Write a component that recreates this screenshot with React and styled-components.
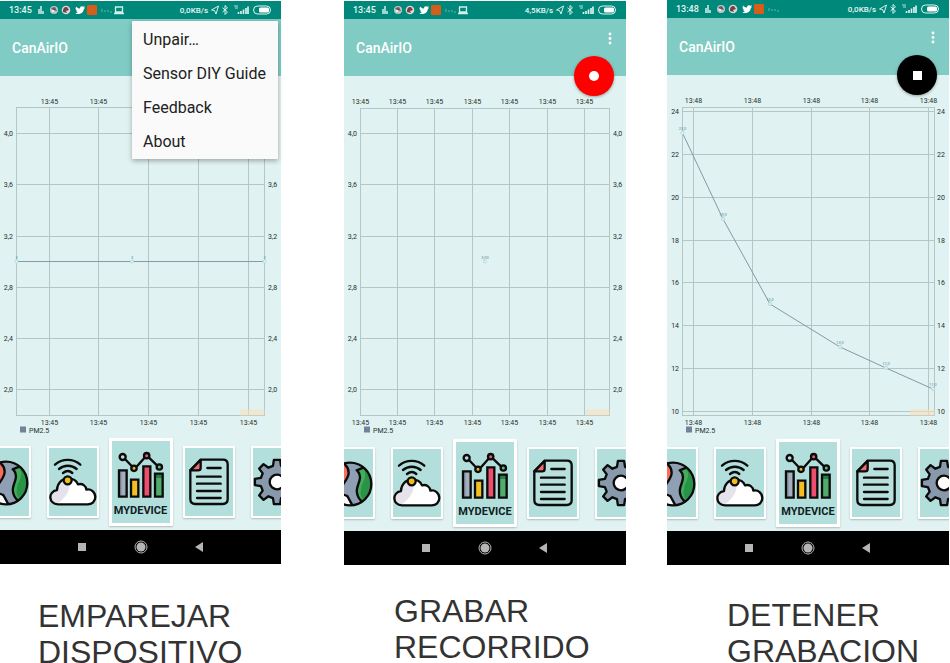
import React from "react";
import styled, { createGlobalStyle } from "styled-components";

const GlobalStyle = createGlobalStyle`
  html { scrollbar-width: none; }
  body { margin: 0; background: #fff; font-family: Roboto, sans-serif; }
  *, *::before, *::after { box-sizing: border-box; }
  button { border: 0; padding: 0; margin: 0; background: none; font: inherit; color: inherit; cursor: pointer; }
  svg { display: block; }
`;

const Page = styled.main`
  display: grid;
  grid-template-columns: 281fr 63fr 282fr 41fr 282fr 1fr;
  align-items: start;
`;

const Column = styled.section`
  grid-column: ${(p) => p.$col};
  min-width: 0;
  padding-top: ${(p) => p.$top}px;
`;

const Phone = styled.article`
  position: relative;
  background: #e0f2f1;
`;

const StatusBar = styled.div`
  display: flex;
  justify-content: space-between;
  align-items: center;
  height: 18px;
  padding: 0 9px;
  background: #00897b;
  color: #e6f5f3;
  font-size: 9px;
  font-weight: 500;
`;

const StatusGroup = styled.div`
  display: flex;
  align-items: center;
  gap: ${(p) => p.$gap}px;
`;

const Speed = styled.span`
  font-size: 8px;
`;

const AppBar = styled.header`
  position: relative;
  display: flex;
  align-items: center;
  justify-content: space-between;
  height: 57px;
  padding: 0 11px 0 12px;
  background: #80cbc4;
`;

const Title = styled.h1`
  margin: 0;
  color: #fff;
  font-size: 14px;
  line-height: 18px;
  font-weight: 500;
`;

const Kebab = styled.button`
  align-self: flex-start;
  display: flex;
  justify-content: center;
  width: 10px;
  padding-top: 13px;
`;

const Fab = styled.button`
  position: absolute;
  right: 12px;
  bottom: -20px;
  display: grid;
  place-items: center;
  width: 40px;
  height: 40px;
  border-radius: 50%;
  background: ${(p) => p.$color};
  box-shadow: 0 1px 3px rgba(0, 0, 0, 0.35);
`;

const FabMark = styled.span`
  width: ${(p) => (p.$round ? 10 : 9)}px;
  height: ${(p) => (p.$round ? 10 : 9)}px;
  border-radius: ${(p) => (p.$round ? "50%" : "0")};
  background: #fff;
`;

const Menu = styled.div`
  position: absolute;
  z-index: 2;
  top: 20px;
  right: 3px;
  width: 146px;
  padding: 2px 0 0;
  border-radius: 1px;
  background: #fafafa;
  box-shadow: 0 2px 5px rgba(0, 0, 0, 0.3);
`;

const MenuItem = styled.button`
  display: block;
  width: 100%;
  padding: 0 11px;
  color: #212121;
  font-size: 16px;
  line-height: 34px;
  text-align: left;
`;

const Plot = styled.svg`
  width: 100%;
  height: auto;
  font-family: Roboto, sans-serif;
  font-size: 7px;
  fill: #1f2f2e;
`;

const Carousel = styled.nav`
  display: flex;
  justify-content: center;
  align-items: center;
  gap: 10px;
  overflow: hidden;
  padding-bottom: 4px;
`;

const CardPair = styled.div`
  display: flex;
  flex: none;
  gap: 16px;
`;

const Card = styled.button`
  flex: none;
  display: grid;
  place-items: center;
  align-content: center;
  width: ${(p) => (p.$active ? 64 : 52)}px;
  height: ${(p) => (p.$active ? 88 : 72)}px;
  padding-top: ${(p) => (p.$active ? 4 : 0)}px;
  border: ${(p) => (p.$active ? 3 : 2)}px solid #fff;
  border-radius: 1px;
  background: #b2dfdb;
  box-shadow: 0 1px 2px rgba(0, 0, 0, 0.22);
`;

const CardLabel = styled.span`
  color: #10201f;
  font-size: 11px;
  line-height: 14px;
  font-weight: 700;
  padding-top: 5px;
`;

const SystemBar = styled.div`
  display: flex;
  justify-content: center;
  align-items: center;
  gap: 45px;
  height: 34px;
  background: #000;
`;

const Caption = styled.h2`
  margin: 0;
  padding: ${(p) => p.$top}px 0 0 ${(p) => p.$left}px;
  color: #333;
  font-family: "Liberation Sans", Arial, sans-serif;
  font-size: 32px;
  line-height: 36px;
  font-weight: 400;
`;

function NotificationIcons({ laptop }) {
  return (
    <svg width="88" height="12" viewBox="0 0 88 12" aria-hidden="true">
      <path d="M1 5v5h6V7H5V2H3v3z" fill="#9fd5cf" />
      <circle cx="17" cy="6" r="4" fill="#b9c9c6" />
      <path d="M14 4l4-1 2 4-4-1z" fill="#6d5560" />
      <circle cx="16" cy="7" r="1" fill="#fff" />
      <circle cx="29" cy="6" r="4.3" fill="#ddd8d5" />
      <path d="M26 8c0-4 1-5 4-5l2 3-3 1 1 2z" fill="#70434a" />
      <path d="M39 2.500c1.200 1.500 2.700 2 4 2 0-2 1.700-2.800 3.200-1.800l1.800-.5-.9 1.500.9.3-1.200 1C46.700 9 41.500 11.500 38.400 9.200l2.400-.8-2-1.700h1.200l-1.500-1.800z" fill="#fff" />
      <rect x="50" y="1" width="10" height="10" rx="1" fill="#dc5a17" />
      <path d="M53 4h4v4h-4z" fill="#ca6520" />
      <path d="M65 5v3M67 7h2M70 7h2M73 8h2" stroke="#5db5ab" strokeWidth="1" />
      {laptop && <path d="M78.500 3h7v5h-7zM77 9.500h10" fill="none" stroke="#d5eeeb" strokeWidth="1.300" />}
    </svg>
  );
}

function SignalIcons() {
  return (
    <svg width="62" height="12" viewBox="0 0 62 12" aria-hidden="true">
      <path d="M1.500 6l7-4-2.500 8-1.500-3.500z" fill="none" stroke="#d9f0ed" strokeWidth="1" />
      <path d="M12.500 3.800l5 4.200-2.500 2.500v-9l2.500 2.300-5 4.200" fill="none" stroke="#d9f0ed" strokeWidth="1" />
      <path d="M24 2h4M25 4h3" stroke="#b6dfda" strokeWidth="1" />
      <path d="M28.500 10V8M31 10V7M33.500 10V5.500M36 10V4M38 10V2.500" stroke="#e6f5f3" strokeWidth="1.600" />
      <rect x="43.500" y="2" width="17" height="8" rx="4" fill="none" stroke="#e6f5f3" />
      <rect x="49" y="3.500" width="10" height="5" rx="1.500" fill="#fff" />
    </svg>
  );
}

function Dots() {
  return (
    <svg width="4" height="13" viewBox="0 0 4 13" fill="#fff" aria-hidden="true">
      <circle cx="2" cy="2" r="1.400" />
      <circle cx="2" cy="6.500" r="1.400" />
      <circle cx="2" cy="11" r="1.400" />
    </svg>
  );
}

const ink = { stroke: "#0b0b0b", strokeWidth: 7, strokeLinecap: "round", strokeLinejoin: "round" };

function GlobeIcon() {
  return (
    <svg width="48" height="48" viewBox="-57 235 144 144" aria-hidden="true">
      <circle cx="18" cy="310" r="64" fill="#8f9fb4" />
      <path d="M38 269l20-8c16 14 24 30 22 52-2 22-14 38-30 48-9-11-15-24-10-39 6-20 12-32-2-53z" fill="#43ad5a" />
      <path d="M56 264c12 12 8 29-2 48-4 14-8 31 2 43 16-12 25-27 25-45 0-20-9-35-25-46z" fill="#299448" />
      <path d="M-10 360c2-19 12-17 20-8l12 20c-12 3-24-4-32-12z" fill="#f6f8f8" />
      <path d="M38 269l20-8M40 270c15 16 5 33 0 50-5 18 1 30 12 42M10 346l14 26M-6 360c0-16 4-22 16-13" fill="none" {...ink} />
      <circle cx="18" cy="310" r="64" fill="none" {...ink} />
      <path d="M-20 244c20 0 34 14 34 32 0 20-20 32-32 64-14-30-34-44-34-64 0-18 14-32 32-32z" fill="#f5705c" {...ink} />
      <circle cx="-19" cy="276" r="12" fill="#fff" {...ink} />
    </svg>
  );
}

function CloudIcon() {
  return (
    <svg width="48" height="48" viewBox="147 235 144 144" aria-hidden="true">
      <path d="M174 374c-29-1-31-38-3-43 0-19 14-34 32-35 15 0 27 7 31 18 14-4 24 5 25 16 14-4 27 8 27 22 0 13-10 22-23 22z" fill="#fff" />
      <path d="M174 371c-26-1-27-35 0-39 1-20 14-33 34-32 6 28-8 52-34 71z" fill="#e6e2ec" />
      <path d="M174 374c-29-1-31-38-3-43 0-19 14-34 32-35 15 0 27 7 31 18 14-4 24 5 25 16 14-4 27 8 27 22 0 13-10 22-23 22z" fill="none" {...ink} />
      <path d="M165 255c22-19 54-19 76 0M177 268c15-13 38-13 53 0M189 280c9-7 20-7 28 0" fill="none" {...ink} />
      <circle cx="203" cy="302" r="12" fill="#f3bd19" {...ink} />
    </svg>
  );
}

function ChartIcon() {
  return (
    <svg width="48" height="48" viewBox="350 209 144 144" aria-hidden="true">
      <path d="M356 267h23v79h-23z" fill="#8996aa" />
      <path d="M364 270h12v73h-12z" fill="#a4aebc" />
      <path d="M392 295h22v51h-22z" fill="#f5bf22" />
      <path d="M429 255h21v91h-21z" fill="#ef4d6c" />
      <path d="M464 277h23v69h-23z" fill="#50ac6a" />
      <path d="M464 277h23v13h-23z" fill="#258149" />
      <path d="M356 267h23v79h-23zM392 295h22v51h-22zM429 255h21v91h-21zM464 277h23v69h-23z" fill="none" {...ink} strokeLinejoin="miter" />
      <path d="M374 233l20 21M410 255l22-25M446 229l24 23" fill="none" {...ink} />
      <circle cx="367" cy="227" r="9" fill="#c0dbe0" {...ink} />
      <circle cx="401" cy="261" r="8" fill="#edb52b" {...ink} />
      <circle cx="439" cy="223" r="8" fill="#e95d72" {...ink} />
      <circle cx="477" cy="257" r="8" fill="#66b881" {...ink} />
    </svg>
  );
}

function DocumentIcon() {
  return (
    <svg width="48" height="48" viewBox="553 235 144 144" aria-hidden="true">
      <path d="M600 240h67c10 0 14 6 14 14v104c0 10-6 15-15 15h-82c-9 0-15-6-15-15v-86z" fill="#b8e0dd" {...ink} />
      <path d="M600 241v23c0 5-3 8-8 8h-23z" fill="#ee6d72" {...ink} />
      <path d="M620 265h40M589 291h71M589 312h71M589 334h71M589 355h71" fill="none" {...ink} />
    </svg>
  );
}

const gearOutline = Array.from({ length: 8 }, (_, i) => i * 45)
  .flatMap((a) => [[a - 14, 50], [a - 8, 67], [a + 8, 67], [a + 14, 50]])
  .map(([deg, r]) => {
    const t = (deg * Math.PI) / 180;
    return `${(72 + r * Math.cos(t)).toFixed(1)},${(72 + r * Math.sin(t)).toFixed(1)}`;
  })
  .join(" ");

function GearIcon() {
  return (
    <svg width="48" height="48" viewBox="0 0 144 144" aria-hidden="true">
      <polygon points={gearOutline} fill="#8799aa" {...ink} />
      <circle cx="72" cy="72" r="22" fill="#fff" {...ink} />
    </svg>
  );
}

function SensorChart({ width, height, left, right, top, bottom, cols, rows, points, labelLeft, labelRight, xLabel, legendX, topLabelY, topLabels = cols.length }) {
  return (
    <Plot viewBox={`0 0 ${width} ${height}`} role="img" aria-label="PM2.5">
      <g stroke="#b4c7c6" strokeWidth="1" shapeRendering="crispEdges">
        {cols.map((x) => <path key={x} d={`M${x} ${top}V${bottom}`} />)}
        {rows.map(([, y]) => <path key={y} d={`M${left} ${y}H${right}`} />)}
        <path d={`M${left} ${top}H${right}V${bottom}H${left}z`} fill="none" />
      </g>
      <rect x={right - 24} y={bottom - 6} width="24" height="6" fill="#f8e0bd" opacity="0.6" />
      <g textAnchor="middle">
        {cols.slice(0, topLabels).map((x) => <text key={x} x={x} y={topLabelY}>{xLabel}</text>)}
        {cols.map((x) => <text key={x} x={x} y={bottom + 9}>{xLabel}</text>)}
      </g>
      {rows.map(([label, y]) => (
        <g key={label}>
          <text x={labelLeft} y={y + 2.5} textAnchor="end">{label}</text>
          <text x={labelRight} y={y + 2.5}>{label}</text>
        </g>
      ))}
      <polyline points={points.map(([x, y]) => `${x},${y}`).join(" ")} fill="none" stroke="#859aa3" strokeWidth="1" />
      {points.map(([x, y, label]) => (
        <g key={x}>
          <circle cx={x} cy={y} r="1.500" fill="#e8fbff" stroke="#a9dbe5" strokeWidth="1" />
          <text x={x} y={y - 3} fontSize="4" fill="#5f8d98" textAnchor="middle">{label}</text>
        </g>
      ))}
      <rect x={legendX} y={bottom + 11} width="6" height="6" fill="#71839a" />
      <text x={legendX + 9} y={bottom + 17}>PM2.5</text>
    </Plot>
  );
}

const decimalRows = [["4,0", 57.5], ["3,6", 108.5], ["3,2", 160.5], ["2,8", 211.5], ["2,4", 262.5], ["2,0", 313.5]];

const screens = [
  {
    col: 1, top: 1, time: "13:45", speed: "0,0KB/s", laptop: true, menu: true,
    caption: ["EMPAREJAR", "DISPOSITIVO"], captionTop: 34, captionLeft: 38,
    chart: {
      width: 281, height: 362, left: 16.5, right: 264.5, top: 31.5, bottom: 339.5, topLabelY: 27.5, topLabels: 2,
      cols: [49.5, 98.5, 148.5, 198.5, 248.5], rows: decimalRows, xLabel: "13:45",
      points: [[16.5, 185.5, "3"], [132, 185.5, "3"], [264.5, 185.5, "3"]],
      labelLeft: 13, labelRight: 268, legendX: 20,
    },
  },
  {
    col: 3, top: 1, time: "13:45", speed: "4,5KB/s", laptop: true, fab: "record",
    caption: ["GRABAR", "RECORRIDO"], captionTop: 28, captionLeft: 50,
    chart: {
      width: 282, height: 363, left: 16.5, right: 265.5, top: 32.5, bottom: 339.5, topLabelY: 27.5,
      cols: [16.5, 53.5, 90.5, 128.5, 165.5, 203.5, 240.5], rows: decimalRows, xLabel: "13:45",
      points: [[141, 185.5, "3,00"]],
      labelLeft: 13, labelRight: 269, legendX: 20,
    },
  },
  {
    col: 5, top: 0, time: "13:48", speed: "0,0KB/s", laptop: false, fab: "stop",
    caption: ["DETENER", "GRABACION"], captionTop: 32, captionLeft: 60,
    chart: {
      width: 282, height: 364, left: 15.5, right: 267.5, top: 32.5, bottom: 340.5, topLabelY: 27.5,
      cols: [26.5, 85.5, 144.5, 202.5, 261.5], xLabel: "13:48",
      rows: [["24", 36.5], ["22", 79.5], ["20", 122.5], ["18", 165.5], ["16", 207.5], ["14", 250.5], ["12", 293.5], ["10", 336.5]],
      points: [[15.5, 58, "23,0"], [56, 144, "19,0"], [103, 229, "15,0"], [173, 272, "13,0"], [219, 293, "12,0"], [266, 314, "11,0"]],
      labelLeft: 12, labelRight: 270, legendX: 19,
    },
  },
];

function Screen({ data }) {
  return (
    <Column $col={data.col} $top={data.top}>
      <Phone>
        <StatusBar>
          <StatusGroup $gap={5}>
            <span>{data.time}</span>
            <NotificationIcons laptop={data.laptop} />
          </StatusGroup>
          <StatusGroup $gap={2}>
            <Speed>{data.speed}</Speed>
            <SignalIcons />
          </StatusGroup>
        </StatusBar>
        <AppBar>
          <Title>CanAirIO</Title>
          <Kebab aria-label="More options"><Dots /></Kebab>
          {data.fab && (
            <Fab $color={data.fab === "record" ? "#fe0000" : "#000"} aria-label={data.fab}>
              <FabMark $round={data.fab === "record"} />
            </Fab>
          )}
        </AppBar>
        {data.menu && (
          <Menu>
            {["Unpair…", "Sensor DIY Guide", "Feedback", "About"].map((t) => <MenuItem key={t}>{t}</MenuItem>)}
          </Menu>
        )}
        <SensorChart {...data.chart} />
        <Carousel>
          <CardPair>
            <Card aria-label="Map"><GlobeIcon /></Card>
            <Card aria-label="Cloud"><CloudIcon /></Card>
          </CardPair>
          <Card $active>
            <ChartIcon />
            <CardLabel>MYDEVICE</CardLabel>
          </Card>
          <CardPair>
            <Card aria-label="Records"><DocumentIcon /></Card>
            <Card aria-label="Settings"><GearIcon /></Card>
          </CardPair>
        </Carousel>
        <SystemBar>
          <button aria-label="Recent apps">
            <svg width="14" height="14" viewBox="0 0 14 14"><path d="M3 3h8v8H3z" fill="#b5b5b5" /></svg>
          </button>
          <button aria-label="Home">
            <svg width="14" height="14" viewBox="0 0 14 14">
              <circle cx="7" cy="7" r="6" fill="none" stroke="#b5b5b5" />
              <circle cx="7" cy="7" r="4.500" fill="#b5b5b5" />
            </svg>
          </button>
          <button aria-label="Back">
            <svg width="14" height="14" viewBox="0 0 14 14"><path d="M2 7l8-5v10z" fill="#b5b5b5" /></svg>
          </button>
        </SystemBar>
      </Phone>
      <Caption $top={data.captionTop} $left={data.captionLeft}>
        {data.caption[0]}
        <br />
        {data.caption[1]}
      </Caption>
    </Column>
  );
}

export default function App() {
  return (
    <>
      <GlobalStyle />
      <Page>
        {screens.map((s) => <Screen key={s.col} data={s} />)}
      </Page>
    </>
  );
}
